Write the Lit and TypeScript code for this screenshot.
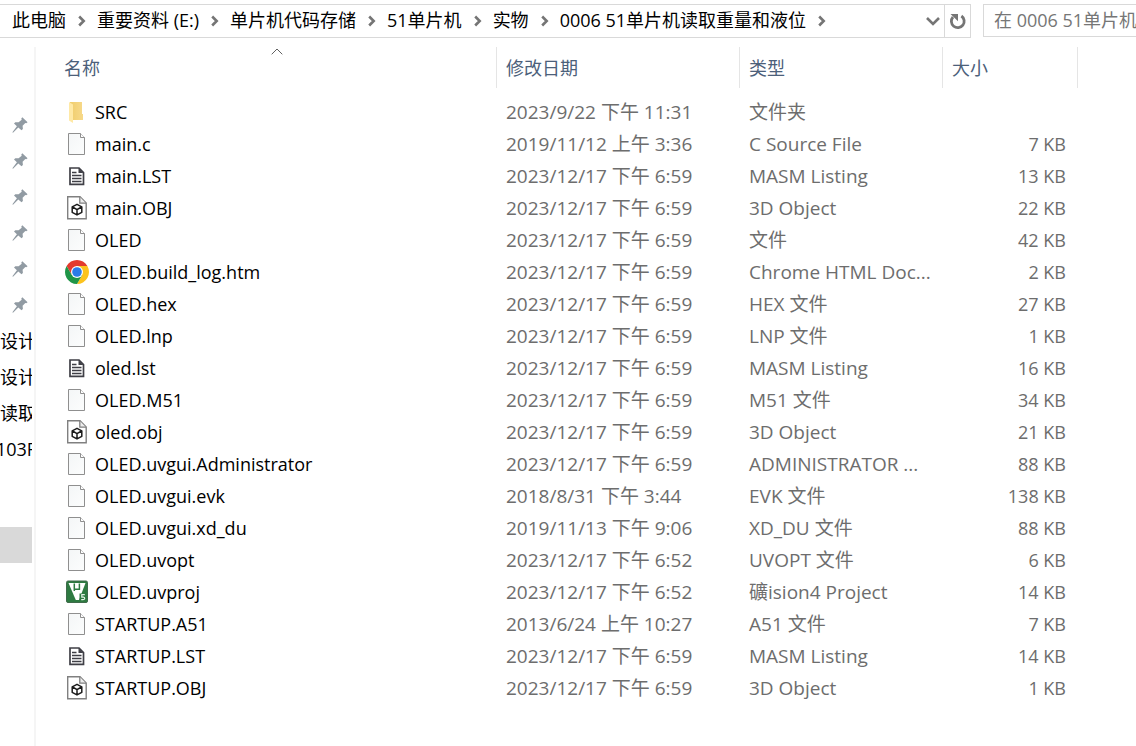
import { LitElement, html, css, svg, TemplateResult } from "lit";
import { customElement, property } from "lit/decorators.js";

type Kind = "folder" | "blank" | "listing" | "object" | "chrome" | "keil";

interface FileEntry {
  name: string;
  kind: Kind;
  date: string;
  type: string;
  size: string;
}

const f = (kind: Kind, name: string, date: string, type: string, size = ""): FileEntry => ({ kind, name, date, type, size });

const FILES: FileEntry[] = [
  f("folder", "SRC", "2023/9/22 下午 11:31", "文件夹"),
  f("blank", "main.c", "2019/11/12 上午 3:36", "C Source File", "7 KB"),
  f("listing", "main.LST", "2023/12/17 下午 6:59", "MASM Listing", "13 KB"),
  f("object", "main.OBJ", "2023/12/17 下午 6:59", "3D Object", "22 KB"),
  f("blank", "OLED", "2023/12/17 下午 6:59", "文件", "42 KB"),
  f("chrome", "OLED.build_log.htm", "2023/12/17 下午 6:59", "Chrome HTML Doc...", "2 KB"),
  f("blank", "OLED.hex", "2023/12/17 下午 6:59", "HEX 文件", "27 KB"),
  f("blank", "OLED.lnp", "2023/12/17 下午 6:59", "LNP 文件", "1 KB"),
  f("listing", "oled.lst", "2023/12/17 下午 6:59", "MASM Listing", "16 KB"),
  f("blank", "OLED.M51", "2023/12/17 下午 6:59", "M51 文件", "34 KB"),
  f("object", "oled.obj", "2023/12/17 下午 6:59", "3D Object", "21 KB"),
  f("blank", "OLED.uvgui.Administrator", "2023/12/17 下午 6:59", "ADMINISTRATOR ...", "88 KB"),
  f("blank", "OLED.uvgui.evk", "2018/8/31 下午 3:44", "EVK 文件", "138 KB"),
  f("blank", "OLED.uvgui.xd_du", "2019/11/13 下午 9:06", "XD_DU 文件", "88 KB"),
  f("blank", "OLED.uvopt", "2023/12/17 下午 6:52", "UVOPT 文件", "6 KB"),
  f("keil", "OLED.uvproj", "2023/12/17 下午 6:52", "礦ision4 Project", "14 KB"),
  f("blank", "STARTUP.A51", "2013/6/24 上午 10:27", "A51 文件", "7 KB"),
  f("listing", "STARTUP.LST", "2023/12/17 下午 6:59", "MASM Listing", "14 KB"),
  f("object", "STARTUP.OBJ", "2023/12/17 下午 6:59", "3D Object", "1 KB"),
];

const PATH = ["此电脑", "重要资料 (E:)", "单片机代码存储", "51单片机", "实物", "0006 51单片机读取重量和液位"];

const SHAPES: Record<Kind, TemplateResult> = {
  folder: svg`
    <defs>
      <linearGradient id="back" x1="0" x2="1"><stop offset="0" stop-color="#f0cd6c"/><stop offset="1" stop-color="#f7d98a"/></linearGradient>
    </defs>
    <path d="M5 2H17V14H18V20H8L5 19Z" fill="url(#back)"/>
    <path d="M4 2L8 4.5V23L4 20.5Z" fill="#ffe9a6"/>`,
  blank: svg`
    <defs>
      <linearGradient id="sheet" x1="0" y1="0" x2="1" y2="1"><stop offset="0" stop-color="#f4f6f7"/><stop offset="1" stop-color="#fcfdfd"/></linearGradient>
    </defs>
    <path d="M3.5 1.5H15.5L19.5 5.5V22.5H3.5Z" fill="url(#sheet)" stroke="#8f8f8f"/>
    <path d="M15.5 1.5V5.5H19.5" fill="#fff" stroke="#8f8f8f"/>`,
  listing: svg`
    <path d="M5 4H14L18.5 8.5V20.3H5Z" fill="#fff" stroke="#3f3f46" stroke-width="1.7"/>
    <path d="M13.5 4V9H18.5Z" fill="#3f3f46"/>
    <path d="M7 8.5H11.5M7 11.5H16.5M7 14.5H16.5M7 17.5H16.5" stroke="#3f3f46" stroke-width="1.5"/>`,
  object: svg`
    <path d="M2.7 .8H15L21.2 7V22.8H2.7Z" fill="#fff" stroke="#808080" stroke-width="1.4"/>
    <path d="M14.8 1V7.2H21" fill="#eee" stroke="#808080" stroke-width="1.3"/>
    <path d="M12 8.3L16.8 10.9V16.3L12 18.9L7.2 16.3V10.9ZM7.6 11L12 13.6L16.5 11M12 13.6V18.5" fill="none" stroke="#1c1c1c" stroke-width="1.5" stroke-linejoin="round"/>`,
  chrome: svg`
    <circle cx="12" cy="12" r="12" fill="#fff"/>
    <path d="M12 6H22.39A12 12 0 0 0 1.61 6L6.8 15Z" fill="#e33b2e"/>
    <path d="M17.2 15L12 24A12 12 0 0 0 22.39 6H12Z" fill="#fcc31e"/>
    <path d="M6.8 15L1.61 6A12 12 0 0 0 12 24L17.2 15Z" fill="#1f9547"/>
    <circle cx="12" cy="12" r="6" fill="#fff"/>
    <circle cx="12" cy="12" r="4.8" fill="#2a7be9"/>`,
  keil: svg`
    <rect x="1.5" y="1" width="21" height="21.5" rx="1.5" fill="#2e7a41" stroke="#3f6b4b"/>
    <path d="M3.5 3H20.5L14 20H10.8Z" fill="#fff"/>
    <path d="M9.3 3.5V11M9.3 9.2H14.4M14.4 3.5V10" fill="none" stroke="#2e7a41" stroke-width="1.5"/>
    <path d="M14.5 13.5H21V21H14.5Z" fill="#2e7a41"/>
    <path d="M19.8 14.7H16.8V17.2H18.6Q19.8 17.4 19.7 18.5Q19.6 19.7 18 19.7H16.2" fill="none" stroke="#e4f2e6" stroke-width="1.2"/>`,
};

@customElement("file-icon")
class FileIcon extends LitElement {
  static styles = css`
    :host { display: block; flex: none; width: 24px; height: 24px; }
    .glyph { display: block; }
  `;

  @property() kind: Kind = "blank";

  render() {
    return html`<svg class="glyph" width="24" height="24" viewBox="0 0 24 24" aria-hidden="true">${SHAPES[this.kind]}</svg>`;
  }
}

@customElement("address-bar")
class AddressBar extends LitElement {
  static styles = css`
    :host { display: flex; gap: 12px; padding-top: 4px; }
    button, input { font: inherit; color: inherit; background: none; border: 0; padding: 0; margin: 0; border-radius: 0; }
    .path { flex: 1; min-width: 0; display: flex; border: 1px solid #d9d9d9; border-left: 0; padding-left: 12px; height: 34px; box-sizing: border-box; }
    .crumbs { flex: 1; min-width: 0; overflow: hidden; display: flex; align-items: center; margin: 0; padding: 0 0 2px; list-style: none; }
    .crumb { display: flex; align-items: center; white-space: nowrap; }
    .sep { display: block; margin: 2px 11px 0 12px; }
    .history { width: 22px; display: grid; place-items: center; }
    .refresh { width: 26px; display: grid; place-items: center; border-left: 1px solid #d9d9d9; }
    .search { width: 153px; height: 33px; box-sizing: border-box; border: 1px solid #d9d9d9; border-right: 0; padding: 0 0 2px 10px; appearance: none; }
    .search::placeholder { color: #767676; opacity: 1; }
  `;

  render() {
    return html`
      <nav class="path" aria-label="地址">
        <ol class="crumbs">
          ${PATH.map((p) => html`<li class="crumb">
            <button>${p}</button>
            <svg class="sep" width="8" height="12" viewBox="0 0 8 12" aria-hidden="true"><path d="M1.2 1.5L5.7 6L1.2 10.5" fill="none" stroke="#757575" stroke-width="2.6"/></svg>
          </li>`)}
        </ol>
        <button class="history" aria-label="以前的位置">
          <svg width="14" height="10" viewBox="0 0 14 10"><path d="M1 2L7 8L13 2" fill="none" stroke="#757575" stroke-width="2.6"/></svg>
        </button>
        <button class="refresh" aria-label="刷新">
          <svg width="18" height="18" viewBox="0 0 18 18"><path d="M12.4 4A6.4 6.4 0 1 1 4 5" fill="none" stroke="#757575" stroke-width="2.8"/><path d="M1.5 2H9V9.2Z" fill="#757575"/></svg>
        </button>
      </nav>
      <input class="search" type="text" aria-label="搜索" placeholder="在 0006 51单片机读取重量和液位 中搜索" />
    `;
  }
}

@customElement("quick-access")
class QuickAccess extends LitElement {
  static styles = css`
    :host { display: block; flex: none; width: 34px; border-right: 2px solid #f5f5f5; padding-top: 60px; }
    .list { list-style: none; margin: 0; padding: 0; width: 32px; }
    .item { height: 36px; display: flex; align-items: center; overflow: hidden; white-space: nowrap; }
    .pinned { padding-left: 12px; }
    .middle { justify-content: center; }
    .selected { margin-top: 60px; background: #d9d9d9; }
  `;

  render() {
    return html`
      <ul class="list">
        ${[0, 1, 2, 3, 4, 5].map(() => html`<li class="item pinned">
          <svg width="16" height="16" viewBox="0 0 16 16" aria-hidden="true"><path d="M10.3 .3L15.6 5.3L14.2 6.2L13.3 5.9L10.6 8.8L10.9 12L9.5 13.3L6.3 10.4L1 15.7L.4 15.3L4.9 9.3L2 6.4L3.3 5.3L6.6 5.3L9.7 2.8L9.3 1.5Z" fill="#919ba3"/></svg>
        </li>`)}
        <li class="item">设计</li>
        <li class="item">设计</li>
        <li class="item">读取</li>
        <li class="item middle">103F</li>
        <li class="item selected"></li>
      </ul>
    `;
  }
}

@customElement("file-table")
class FileTable extends LitElement {
  static styles = css`
    :host { display: block; flex: 1; min-width: 0; }
    .files { width: 100%; border-collapse: separate; border-spacing: 0; table-layout: fixed; }
    .date { width: 243px; }
    .type { width: 203px; }
    .size { width: 135px; }
    .rest { width: 58px; }
    th { height: 41px; padding: 0 0 8px; font-weight: 400; text-align: left; vertical-align: top; }
    .head { display: block; width: 100%; height: 41px; margin: 0; padding: 0 9px; border: 0; border-right: 1px solid #e5e5e5; background: none; font: inherit; color: #4c607a; text-align: left; }
    .sorted { position: relative; padding-left: 28px; }
    .arrow { position: absolute; top: 1px; left: 51%; }
    td { height: 32px; padding: 0 9px; color: #6d6d6d; white-space: nowrap; overflow: hidden; }
    .name { padding-left: 29px; color: #000; font-kerning: none; }
    .label { display: flex; align-items: center; gap: 6px; }
    .detail { font-size: 19px; }
    .num { text-align: right; padding-right: 12px; }
  `;

  render() {
    return html`
      <table class="files">
        <colgroup><col /><col class="date" /><col class="type" /><col class="size" /><col class="rest" /></colgroup>
        <thead>
          <tr>
            <th aria-sort="ascending"><button class="head sorted">名称
              <svg class="arrow" width="12" height="7" viewBox="0 0 12 7" aria-hidden="true"><path d="M.7 6.3L6 1L11.3 6.3" fill="none" stroke="#606060"/></svg>
            </button></th>
            <th><button class="head">修改日期</button></th>
            <th><button class="head">类型</button></th>
            <th><button class="head">大小</button></th>
            <th></th>
          </tr>
        </thead>
        <tbody>
          ${FILES.map((e) => html`<tr>
            <td class="name"><span class="label"><file-icon .kind=${e.kind}></file-icon><span>${e.name}</span></span></td>
            <td class="detail">${e.date}</td>
            <td class="detail">${e.type}</td>
            <td class="num">${e.size}</td>
            <td></td>
          </tr>`)}
        </tbody>
      </table>
    `;
  }
}

@customElement("app-root")
class AppRoot extends LitElement {
  static styles = css`
    :host { display: flex; flex-direction: column; min-height: 100vh; background: #fff; color: #000; overflow: hidden; font: 18px/24px "Open Sans", "Noto Sans CJK SC", sans-serif; }
    .body { flex: 1; display: flex; margin-top: 9px; }
  `;

  render() {
    return html`
      <address-bar></address-bar>
      <main class="body">
        <quick-access></quick-access>
        <file-table></file-table>
      </main>
    `;
  }
}
